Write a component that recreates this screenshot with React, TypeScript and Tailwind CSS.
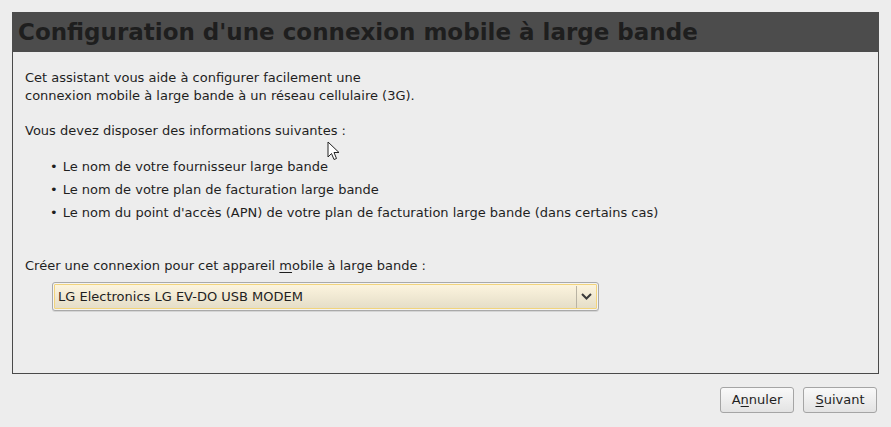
import React from "react";

export default function App() {
  const font = { fontFamily: '"DejaVu Sans", "Liberation Sans", sans-serif' };
  return (
    <div className="w-[891px] h-[427px] bg-[#ededed] relative overflow-hidden text-[#1f1f1f]" style={font}>
      <div className="pt-[12px] pl-[12px] pr-[12px]">
        <div className="w-[867px] h-[362px] border-x border-b border-[#4a4a4a] flex flex-col">
          <div className="h-[40px] -mx-px bg-[#4c4c4c] flex items-center pl-[6px]">
            <span className="text-[23px] font-bold text-[#1e1e1e] leading-none">
              Configuration d'une connexion mobile à large bande
            </span>
          </div>
          <div className="pl-[12px] pt-[17px] text-[13px] leading-[18px]">
            <p>Cet assistant vous aide à configurer facilement une</p>
            <p>connexion mobile à large bande à un réseau cellulaire (3G).</p>
            <p className="mt-[17px]">Vous devez disposer des informations suivantes :</p>
            <ul className="mt-[18px] flex flex-col gap-[5px] pl-[25px]">
              <li className="flex gap-[5px]"><span>•</span><span>Le nom de votre fournisseur large bande</span></li>
              <li className="flex gap-[5px]"><span>•</span><span>Le nom de votre plan de facturation large bande</span></li>
              <li className="flex gap-[5px]"><span>•</span><span>Le nom du point d'accès (APN) de votre plan de facturation large bande (dans certains cas)</span></li>
            </ul>
            <p className="mt-[35px]">
              Créer une connexion pour cet appareil <span className="underline underline-offset-2">m</span>obile à large bande :
            </p>
            <div className="mt-[7px] ml-[27px] w-[547px] h-[29px] rounded-[3px] border border-[#a9a9a9] bg-[#f4f4f4] p-px shadow-[0_1px_0_#d5d5d5]">
              <div className="h-full border border-[#f2d47c] rounded-[1px] bg-gradient-to-b from-[#fcf4de] to-[#e5dec8] flex items-center">
                <span className="flex-1 pl-[3px] text-[13px]">LG Electronics LG EV-DO USB MODEM</span>
                <div className="w-px h-[22px] bg-[#b9b3a3]" />
                <div className="w-[19px] flex items-center justify-center">
                  <svg width="11" height="7" viewBox="0 0 11 7">
                    <path d="M1 1 L5.5 5.5 L10 1" fill="none" stroke="#3a3a3a" strokeWidth="2" />
                  </svg>
                </div>
              </div>
            </div>
          </div>
        </div>
      </div>
      <div className="flex justify-end gap-[9px] pr-[14px] mt-[13px]">
        <button className="w-[74px] h-[26px] rounded-[3px] border border-[#a5a5a5] bg-gradient-to-b from-[#f9f9f9] to-[#e3e3e3] text-[13px] text-[#1f1f1f]">
          A<span className="underline underline-offset-2">n</span>nuler
        </button>
        <button className="w-[74px] h-[26px] rounded-[3px] border border-[#a5a5a5] bg-gradient-to-b from-[#f9f9f9] to-[#e3e3e3] text-[13px] text-[#1f1f1f]">
          <span className="underline underline-offset-2">S</span>uivant
        </button>
      </div>
      <svg className="absolute left-[327px] top-[141px]" width="14" height="22" viewBox="0 0 14 22">
        <path d="M1 1 L1 16 L4.5 12.5 L7 18.5 L9.5 17.5 L7 11.5 L12 11.5 Z" fill="#ffffff" stroke="#222" strokeWidth="1" strokeLinejoin="round" />
      </svg>
    </div>
  );
}
